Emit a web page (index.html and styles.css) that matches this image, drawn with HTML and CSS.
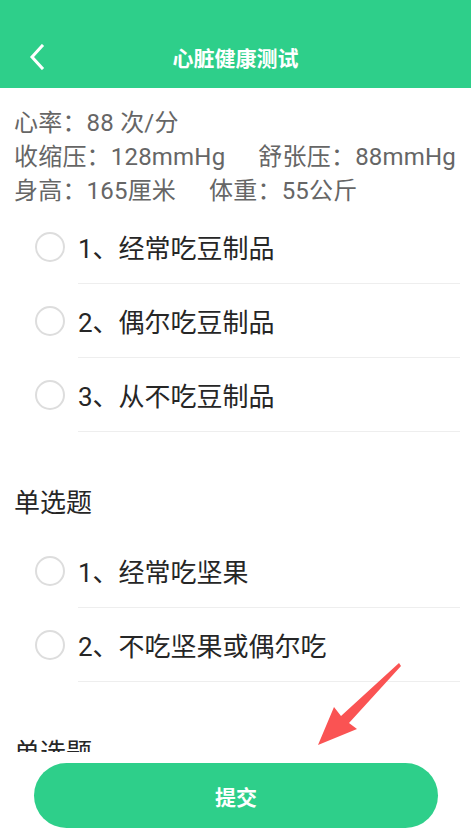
FILE: index.html
```html
<!DOCTYPE html>
<html lang="zh-CN">
<head>
    <meta charset="UTF-8">
    <meta name="viewport" content="width=device-width, initial-scale=1.0">
    <title>心脏健康测试</title>
    <link rel="stylesheet" href="styles.css">
</head>
<body>
    <div class="page">
        <header class="nav">
            <span class="back">
                <svg width="16" height="26" viewBox="0 0 16 26">
                    <polyline points="13,2 3,13 13,24" fill="none" stroke="#fff" stroke-width="3" stroke-linecap="square" />
                </svg>
            </span>
            <h1>心脏健康测试</h1>
        </header>

        <main class="content">
            <div class="info">
                <p>心率：88 次/分</p>
                <p>收缩压：128mmHg<span class="gap">舒张压：88mmHg</span></p>
                <p>身高：165厘米<span class="gap">体重：55公斤</span></p>
            </div>

            <ul class="options">
                <li><span class="radio"></span><span class="label">1、经常吃豆制品</span></li>
                <li><span class="radio"></span><span class="label">2、偶尔吃豆制品</span></li>
                <li><span class="radio"></span><span class="label">3、从不吃豆制品</span></li>
            </ul>

            <section class="question">
                <h2>单选题</h2>
                <ul class="options">
                    <li><span class="radio"></span><span class="label">1、经常吃坚果</span></li>
                    <li><span class="radio"></span><span class="label">2、不吃坚果或偶尔吃</span></li>
                </ul>
            </section>

            <section class="question">
                <h2>单选题</h2>
                <ul class="options">
                    <li><span class="radio"></span><span class="label">1、经常吃鱼</span></li>
                </ul>
            </section>
        </main>

        <footer class="footer">
            <button class="submit">提交</button>
        </footer>

        <!-- annotation arrow pointing at the submit button -->
        <svg class="arrow" width="471" height="837" viewBox="0 0 471 837">
            <polygon points="318,745 334,707 341,716 399,663 401,666 349,723 357,729" fill="#fa5353" />
        </svg>
    </div>
</body>
</html>
```

FILE: styles.css
```css
* {
    box-sizing: border-box;
}

body {
    margin: 0;
    background-color: #ffffff;
    font-family: Roboto, "Noto Sans CJK SC", sans-serif;
    color: #333333;
}

.page {
    position: relative;
    height: 837px;
    display: flex;
    flex-direction: column;
    overflow: hidden;
}

.nav {
    flex: none;
    height: 88px;
    padding-top: 25px;
    background-color: #2ecf8a;
    display: flex;
    align-items: center;
    justify-content: center;
    position: relative;
}

.nav h1 {
    margin: 0;
    font-size: 21px;
    font-weight: bold;
    color: #ffffff;
}

.back {
    position: absolute;
    left: 29px;
    top: 44px;
    display: flex;
}

.content {
    flex: 1;
    overflow: hidden;
}

.info {
    padding: 18px 14px 2px;
    color: #666666;
    font-size: 24px;
}

.info p {
    margin: 0;
    line-height: 34px;
    letter-spacing: 0.2px;
}

.info .gap {
    margin-left: 33px;
}

.options {
    list-style: none;
    margin: 0;
    padding: 0;
}

.options li {
    display: flex;
    align-items: center;
}

.radio {
    flex: none;
    width: 30px;
    height: 30px;
    margin-left: 35px;
    margin-right: 13px;
    border: 2px solid #dddddd;
    border-radius: 50%;
}

.label {
    flex: 1;
    height: 74px;
    margin-right: 11px;
    border-bottom: 1px solid #eeeeee;
    display: flex;
    align-items: center;
    font-size: 26px;
    color: #262626;
}

.question h2 {
    margin: 54px 0 14px;
    padding-left: 14px;
    font-size: 26px;
    font-weight: normal;
    line-height: 34px;
    color: #262626;
}

.footer {
    flex: none;
    background-color: #ffffff;
    padding: 11px 33px 9px 34px;
}

.submit {
    width: 100%;
    height: 65px;
    border: none;
    border-radius: 33px;
    background-color: #2ecf8a;
    color: #ffffff;
    font-family: Roboto, "Noto Sans CJK SC", sans-serif;
    font-size: 21px;
    font-weight: bold;
}

.arrow {
    position: absolute;
    left: 0;
    top: 0;
    pointer-events: none;
}
```
